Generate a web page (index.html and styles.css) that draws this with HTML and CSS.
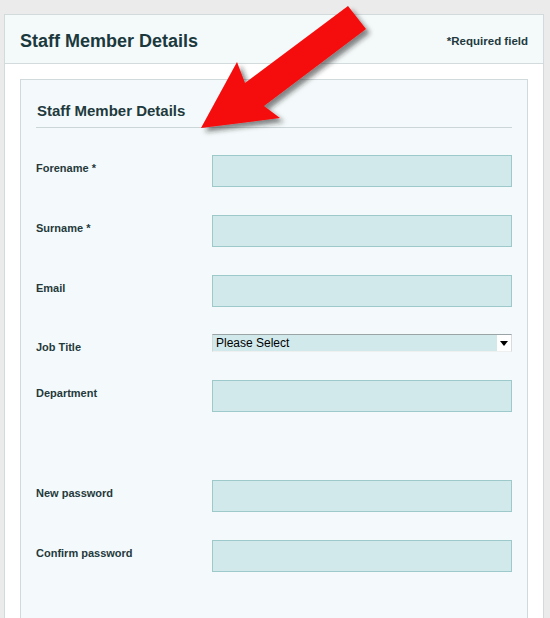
FILE: index.html
```html
<!DOCTYPE html>
<html lang="en">
<head>
<meta charset="utf-8">
<title>Staff Member Details</title>
<link rel="stylesheet" href="styles.css">
</head>
<body>
<div class="panel">
  <div class="panel-head">
    <h1 class="panel-title">Staff Member Details</h1>
    <span class="required-note">*Required field</span>
  </div>
  <div class="panel-body">
    <div class="box">
      <h2 class="box-title">Staff Member Details</h2>
      <form class="form">
        <div class="row">
          <label class="label">Forename *</label>
          <input class="input" type="text">
        </div>
        <div class="row">
          <label class="label">Surname *</label>
          <input class="input" type="text">
        </div>
        <div class="row">
          <label class="label">Email</label>
          <input class="input" type="text">
        </div>
        <div class="row row-select">
          <label class="label">Job Title</label>
          <div class="select-wrap">
            <select class="select"><option>Please Select</option></select>
          </div>
        </div>
        <div class="row row-spaced">
          <label class="label">Department</label>
          <input class="input" type="text">
        </div>
        <div class="row">
          <label class="label">New password</label>
          <input class="input" type="password">
        </div>
        <div class="row">
          <label class="label">Confirm password</label>
          <input class="input" type="password">
        </div>
      </form>
    </div>
  </div>
</div>
<svg class="arrow" width="200" height="150" viewBox="180 0 200 150" aria-hidden="true">
  <defs>
    <filter id="shadow" x="-20%" y="-20%" width="150%" height="150%">
      <feDropShadow dx="4" dy="4" stdDeviation="2.5" flood-color="#222" flood-opacity="0.55"/>
    </filter>
  </defs>
  <polygon filter="url(#shadow)" fill="#f50a0a" points="348,6 366,29 264,106 280,118 201,128 237,62 245,83"/>
</svg>
</body>
</html>
```
FILE: styles.css
```css
html, body {
  margin: 0;
  padding: 0;
}
body {
  background: #ebebeb;
  font-family: "Liberation Sans", Arial, sans-serif;
  padding: 14px 0 0 4px;
  position: relative;
  height: 618px;
  box-sizing: border-box;
  overflow: hidden;
}
.panel {
  width: 540px;
  box-sizing: border-box;
  border: 1px solid #d2dadc;
  background: #ffffff;
}
.panel-head {
  box-sizing: border-box;
  height: 49px;
  background: #f4f9fa;
  border-bottom: 1px solid #d3dbdd;
  display: flex;
  align-items: center;
  justify-content: space-between;
  padding: 3px 15px 0;
}
.panel-title {
  margin: 0;
  font-size: 18px;
  font-weight: bold;
  color: #1b393d;
  line-height: 22px;
}
.required-note {
  font-size: 11.5px;
  font-weight: bold;
  color: #1f3a3e;
}
.panel-body {
  padding: 15px 15px 0;
}
.box {
  border: 1px solid #d0d9db;
  border-bottom: none;
  background: #f4fafb;
  padding: 22px 15px 60px 15px;
}
.box-title {
  margin: 0;
  font-size: 15px;
  font-weight: bold;
  color: #1f3a3e;
  line-height: 18px;
  padding: 0 0 7px 1px;
  border-bottom: 1px solid #cbd6d8;
}
.form {
  margin-top: 27px;
  display: flex;
  flex-direction: column;
  gap: 28px;
}
.row {
  display: flex;
  align-items: flex-start;
}
.row-select {
  margin-top: -1px;
  height: 18px;
}
.row-spaced {
  margin-bottom: 40px;
}
.label {
  width: 176px;
  flex: none;
  font-size: 11px;
  font-weight: bold;
  color: #25393c;
  line-height: 13px;
  padding-top: 7px;
}
.input {
  width: 302px;
  height: 32px;
  box-sizing: border-box;
  margin: 0;
  border: 1px solid #9dc9cb;
  background: #d2e9ec;
  padding: 0 4px;
  font-family: inherit;
  font-size: 12px;
}
.select-wrap {
  position: relative;
  width: 300px;
  height: 18px;
}
.select {
  appearance: none;
  -webkit-appearance: none;
  display: block;
  width: 100%;
  height: 18px;
  box-sizing: border-box;
  margin: 0;
  border: 1px solid;
  border-color: #9aa3a5 #d7dcdd #eef0f0 #d2d7d8;
  border-radius: 0;
  background: linear-gradient(to right, #d2e9ec 0, #d2e9ec 284px, #ffffff 284px);
  padding: 0 0 0 3px;
  font-family: "Liberation Sans", Arial, sans-serif;
  font-size: 12px;
  line-height: 16px;
  color: #000;
}
.select-wrap::after {
  content: "";
  position: absolute;
  right: 4px;
  top: 7px;
  border-left: 4px solid transparent;
  border-right: 4px solid transparent;
  border-top: 5px solid #000;
  pointer-events: none;
}
.arrow {
  position: absolute;
  left: 180px;
  top: 0;
  pointer-events: none;
}
```
